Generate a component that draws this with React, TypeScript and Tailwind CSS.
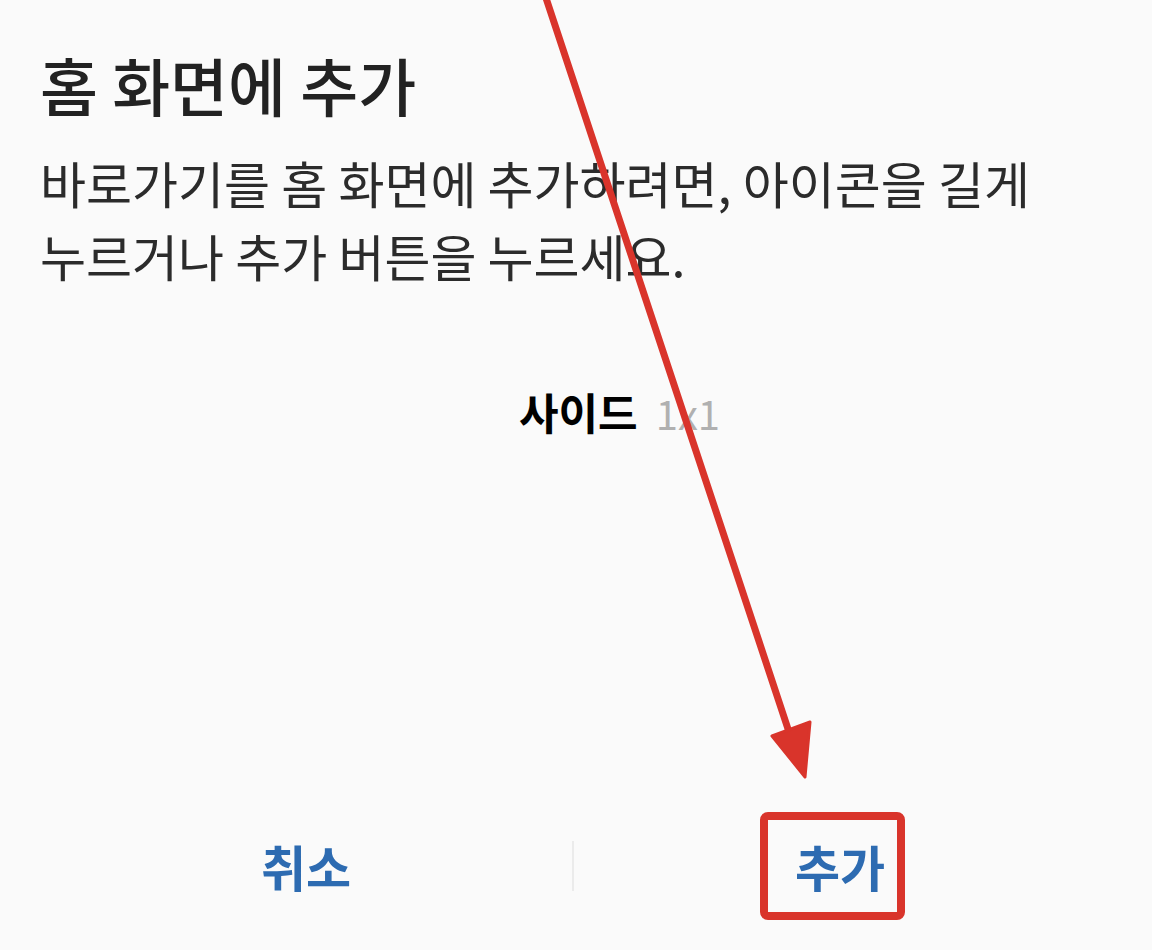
export default function App() {
  return (
    <div
      className="relative w-[1152px] h-[950px] overflow-hidden bg-[#fafafa] flex flex-col"
      style={{ fontFamily: '"Noto Sans CJK KR", "Noto Sans", sans-serif' }}
    >
      <div className="pl-[40px] pt-[46px]">
        <h1 className="text-[63px] leading-[76px] font-medium text-[#222222]">홈 화면에 추가</h1>
        <p className="mt-[24px] text-[50px] leading-[73px] text-[#2b2b2b]">
          바로가기를 홈 화면에 추가하려면, 아이콘을 길게
          <br />
          누르거나 추가 버튼을 누르세요.
        </p>
      </div>
      <div className="mt-[91px] flex items-baseline pl-[519px] gap-[18px]">
        <span className="text-[43px] font-bold text-black leading-[56px]">사이드</span>
        <span className="text-[40px] text-[#b0b0b0] leading-[56px]">1x1</span>
      </div>
      <div className="flex-1" />
      <div className="mx-[40px] w-[1066px] flex items-center mb-[54px] h-[60px]">
        <div className="flex-1 flex justify-center">
          <span className="text-[49px] font-bold text-[#2d6bb1] leading-[60px]">취소</span>
        </div>
        <div className="w-[2px] h-[50px] bg-[#ebebeb]" />
        <div className="flex-1 flex justify-center">
          <span className="text-[49px] font-bold text-[#2d6bb1] leading-[60px]">추가</span>
        </div>
      </div>
      <svg className="absolute inset-0 pointer-events-none" width="1152" height="950" viewBox="0 0 1152 950">
        <line x1="545" y1="-5" x2="790" y2="735" stroke="#d9342b" strokeWidth="7" strokeLinecap="round" />
        <polygon points="772,736 810,722 805,777" fill="#d9342b" stroke="#d9342b" strokeWidth="3" strokeLinejoin="round" />
        <rect x="764" y="816" width="137" height="100" rx="4" fill="none" stroke="#d9342b" strokeWidth="8" />
      </svg>
    </div>
  );
}
